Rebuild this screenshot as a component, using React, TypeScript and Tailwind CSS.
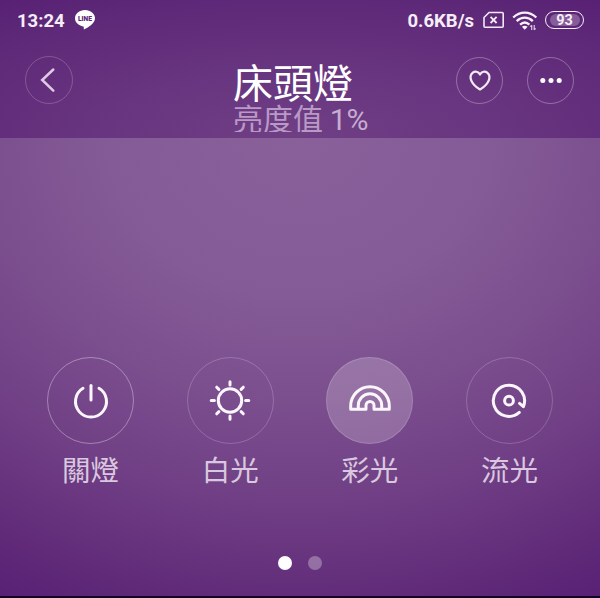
import type { ReactNode } from 'react';

type Mode = {
  label: string;
  icon: ReactNode;
  ring: string;
};

const LineLogo = () => (
  <svg width="22" height="22" viewBox="0 0 22 22">
    <path
      d="M11 1C5.300 1 1 4.700 1 9.300c0 4.100 3.500 7.300 8.200 8.200.8.200.7.700.5 2.300 0 .5.300.6.800.4 2.900-1.400 10.500-5.400 10.500-10.900C21 4.700 16.700 1 11 1z"
      fill="#fff"
    />
    <text
      x="11" y="12.200" textAnchor="middle" textLength="14" lengthAdjust="spacingAndGlyphs"
      fontFamily="Roboto, sans-serif" fontSize="7.300" fontWeight="900" fill="#5c2877"
    >
      LINE
    </text>
  </svg>
);

const SimIcon = () => (
  <svg width="22" height="18" viewBox="0 0 22 18" fill="none" stroke="#f3e9f6" strokeWidth="1.600" strokeLinejoin="round">
    <path d="M6 1.500h13.200q1 0 1 1v12.700q0 1-1 1H2q-1 0-1-1V6.500z" />
    <path d="M7.600 5.800l6 6.200M13.600 5.800l-6 6.200" strokeWidth="1.800" />
  </svg>
);

const WifiIcon = () => (
  <svg width="26" height="20" viewBox="0 0 26 20" fill="none" stroke="#f8f0fa" strokeWidth="2.300">
    <path d="M1.200 6.500C8-.1 17.500-.1 24.300 6.500" />
    <path d="M4.700 10.100C9.500 5.500 16 5.500 20.800 10.100" />
    <path d="M8.100 13.600C11 10.900 14.500 10.900 17.400 13.600" />
    <path d="M9.900 15.800q2.850-2.100 5.700 0l-2.850 3z" fill="#f8f0fa" stroke="none" />
    <path d="M19.700 14.200v4.800m-1.500-3.300l1.500-1.500M22.200 18.900v-4.800m1.500 3.300l-1.500 1.500" strokeWidth="1.200" opacity=".8" />
  </svg>
);

const BackIcon = () => (
  <svg width="48" height="48" viewBox="0 0 48 48" className="shrink-0" fill="none" stroke="#dccbe2" strokeWidth="2.500" strokeLinecap="round">
    <path d="M28.300 13.500L17.200 24l11.100 10.600" />
  </svg>
);

const HeartIcon = () => (
  <svg width="46" height="46" viewBox="0 0 46 46" className="shrink-0" fill="none" stroke="#f3eaf6" strokeWidth="2.200" strokeLinejoin="round">
    <path d="M23 16.500C21.300 13.200 17.900 13 15.800 14.600C13.200 16.700 13.100 20.100 14.600 23.200C16.300 26.600 19.400 29.300 23 31.500C26.600 29.300 29.700 26.600 31.400 23.200C32.900 20.100 32.800 16.700 30.200 14.600C28.100 13 24.700 13.200 23 16.500z" />
  </svg>
);

const MoreIcon = () => (
  <svg width="46" height="46" viewBox="0 0 46 46" className="shrink-0" fill="#fff">
    <circle cx="14.800" cy="22.500" r="2.500" />
    <circle cx="23" cy="22.500" r="2.500" />
    <circle cx="31.200" cy="22.500" r="2.500" />
  </svg>
);

const PowerIcon = () => (
  <svg width="44" height="44" viewBox="0 0 44 44" fill="none" stroke="#fbf6fc" strokeWidth="3" strokeLinecap="round">
    <path d="M22 6.500V21" />
    <path d="M14 9.300A15.500 15.500 0 1 0 30 9.300" />
  </svg>
);

const SunIcon = () => (
  <svg width="44" height="44" viewBox="0 0 44 44" fill="none" stroke="#fbf6fc" strokeWidth="3" strokeLinecap="round">
    <circle cx="22" cy="21.500" r="11.700" />
    <path d="M22 2.700v3.200M22 37.100v3.200M3.200 21.500h3.200M37.600 21.500h3.200M8.700 8.200l2.200 2.200M33.100 32.600l2.200 2.200M35.300 8.200l-2.200 2.200M10.900 32.600l-2.200 2.200" />
  </svg>
);

const RainbowIcon = () => (
  <svg width="44" height="44" viewBox="0 0 44 44" fill="none" stroke="#fbf6fc" strokeWidth="3" strokeLinejoin="round">
    <path d="M2.700 30.300V27a19.300 19.300 0 0 1 38.600 0V30.300H26V26.500a4 4 0 0 0-8 0V30.300z" />
    <path d="M10.300 30V26.500a11.700 11.700 0 0 1 23.400 0V30" />
  </svg>
);

const FlowIcon = () => (
  <svg width="44" height="44" viewBox="0 0 44 44" fill="none" stroke="#fbf6fc" strokeWidth="3" strokeLinecap="round" strokeLinejoin="round">
    <circle cx="22" cy="21.700" r="4.400" />
    <path d="M32.300 33.400A15.600 15.600 0 1 1 36.400 27.600L32.600 24.400" />
  </svg>
);

const modes: Mode[] = [
  { label: '關燈', icon: <PowerIcon />, ring: 'border-white/35' },
  { label: '白光', icon: <SunIcon />, ring: 'border-white/20' },
  { label: '彩光', icon: <RainbowIcon />, ring: 'border-white/15 bg-white/20' },
  { label: '流光', icon: <FlowIcon />, ring: 'border-white/20' },
];

function StatusBar() {
  return (
    <div className="flex h-10 items-center pl-[17px] pr-4 font-[Roboto,sans-serif] text-[18.500px] font-bold text-[#f5edf7]">
      <span className="mt-[3px] w-[57px]">13:24</span>
      <LineLogo />
      <span className="ml-auto mr-[9px] mt-[3px]">0.6KB/s</span>
      <SimIcon />
      <span className="ml-[7px] mr-[7px] mt-px"><WifiIcon /></span>
      <div className="flex h-[18px] w-[39px] items-center justify-center rounded-full border-[1.500px] border-[#f5edf7]">
        <span className="flex h-3 w-[30px] items-center justify-center rounded-full bg-white/25 pt-0.5 text-[14.500px] leading-none">93</span>
      </div>
    </div>
  );
}

export default function App() {
  return (
    <div className="flex h-[598px] w-[600px] flex-col overflow-hidden bg-[#5b2577] font-['Noto_Sans_CJK_TC',sans-serif]">
      <header className="h-[138px] bg-[radial-gradient(ellipse_660px_230px_at_50%_100%,#6f3f84_0%,#683580_30%,#5e2978_60%,#571f74_78%)]">
        <StatusBar />
        <div className="flex items-start pl-[25px] pr-[26px]">
          <button className="mt-4 flex size-12 items-center justify-center rounded-full border border-white/20">
            <BackIcon />
          </button>
          <div className="ml-40 h-[92px] w-[150px] overflow-hidden whitespace-nowrap pt-[19px]">
            <h1 className="text-[40px] leading-[45px] text-white">床頭燈</h1>
            <p className="text-[30px] leading-[26px] text-[#b999c6]">
              亮度值 <span className="font-[Roboto,sans-serif] text-[#c6add0]">1%</span>
            </p>
          </div>
          <div className="ml-auto mt-[17px] flex gap-6">
            <button className="flex size-[47px] items-center justify-center rounded-full border border-white/30">
              <HeartIcon />
            </button>
            <button className="flex size-[47px] items-center justify-center rounded-full border border-white/30">
              <MoreIcon />
            </button>
          </div>
        </div>
      </header>

      <main className="flex h-[458px] flex-col bg-[radial-gradient(ellipse_660px_550px_at_50%_0%,#89609a_0%,#845b96_29%,#7b4e8e_48%,#703f85_66%,#612b79_84%,#572075_96%)]">
        <div className="mt-[219px] flex justify-between pl-[47px] pr-[47px]">
          {modes.map((m) => (
            <div key={m.label} className="flex flex-col items-center">
              <button className={`flex size-[87px] items-center justify-center rounded-full border ${m.ring}`}>
                {m.icon}
              </button>
              <span className="mt-[7px] text-[28.500px] leading-9 text-[#d9c8df]">{m.label}</span>
            </div>
          ))}
        </div>
        <div className="mt-[69px] flex justify-center gap-4">
          <span className="size-3.5 rounded-full bg-white" />
          <span className="size-3.5 rounded-full bg-white/30" />
        </div>
      </main>
      <div className="h-0.5 bg-[#0f0628]" />
    </div>
  );
}
